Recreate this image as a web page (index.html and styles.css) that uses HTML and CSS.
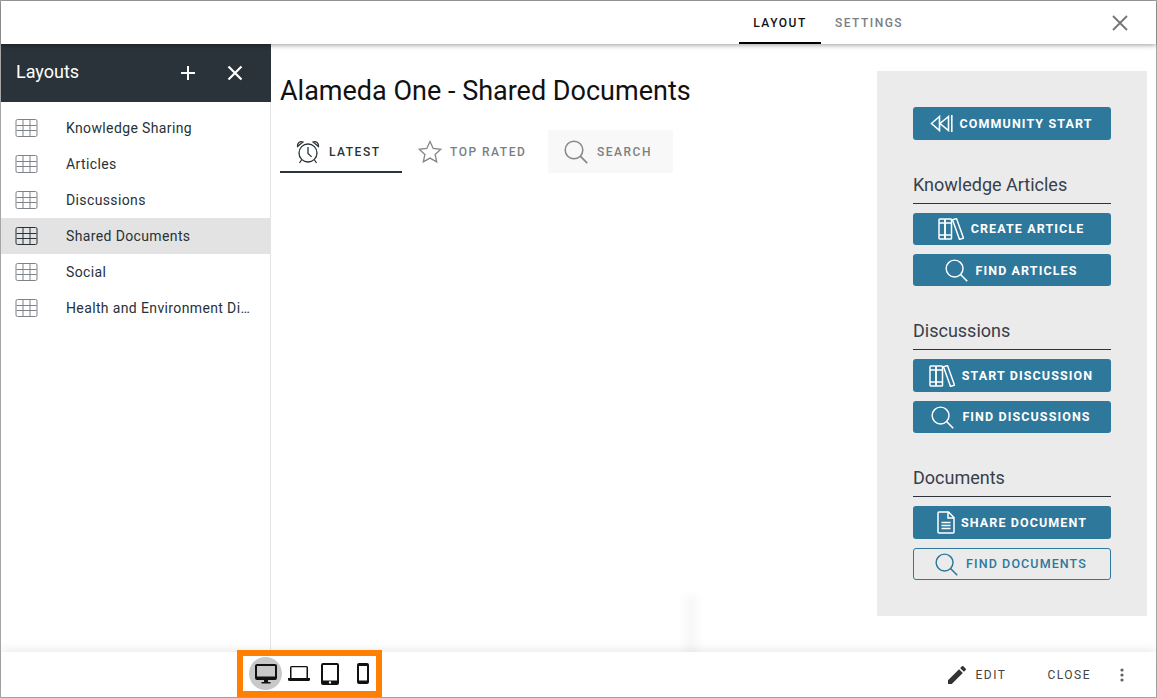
FILE: index.html
```html
<!DOCTYPE html>
<html lang="en">
<head>
<meta charset="utf-8">
<title>Layouts</title>
<link rel="stylesheet" href="styles.css">
</head>
<body>
<svg class="defs" width="0" height="0" aria-hidden="true">
  <symbol id="grid" viewBox="0 0 22 18"><rect x=".5" y=".5" width="21" height="17" rx="1.5" fill="none" stroke="currentColor"/><path d="M7.5 1v16M14.500 1v16M1 6.500h20M1 11.500h20" stroke="currentColor" fill="none"/></symbol>
  <symbol id="search" viewBox="0 0 24 24"><circle cx="10" cy="10" r="8.800" fill="none" stroke="currentColor" stroke-width="1.500"/><path d="M16.200 16.200l7 7" stroke="currentColor" stroke-width="1.700" fill="none"/></symbol>
  <symbol id="books" viewBox="0 0 26 22"><g fill="none" stroke="currentColor" stroke-width="1.500"><rect x="1" y="1" width="6" height="20" rx=".8"/><rect x="7" y="1" width="6.500" height="20" rx=".8"/><path d="M1 5h12.500M1 17h12.500"/><path d="M14.500 1.800l4-1.200 7 19.500-4 1.300z"/></g></symbol>
</svg>
<div class="shell">
  <header class="topbar">
    <nav class="toptabs">
      <a class="toptab active">LAYOUT</a>
      <a class="toptab">SETTINGS</a>
    </nav>
    <svg class="topclose" width="16" height="16" viewBox="0 0 16 16"><path d="M1 1l14 14M15 1L1 15" stroke="#757575" stroke-width="1.800" fill="none"/></svg>
  </header>
  <div class="main">
    <aside class="sidebar">
      <div class="sidehead">
        <span class="sidetitle">Layouts</span>
        <svg class="sideicon plus" width="14" height="14" viewBox="0 0 14 14"><path d="M7 0v14M0 7h14" stroke="#fff" stroke-width="2" fill="none"/></svg>
        <svg class="sideicon cross" width="16" height="16" viewBox="0 0 16 16"><path d="M1.500 1.500l13 13M14.500 1.500l-13 13" stroke="#fff" stroke-width="2.200" fill="none"/></svg>
      </div>
      <ul class="sidelist">
        <li class="sideitem"><svg class="gridicon"><use href="#grid"/></svg><span class="sidelabel">Knowledge Sharing</span></li>
        <li class="sideitem"><svg class="gridicon"><use href="#grid"/></svg><span class="sidelabel">Articles</span></li>
        <li class="sideitem"><svg class="gridicon"><use href="#grid"/></svg><span class="sidelabel">Discussions</span></li>
        <li class="sideitem selected"><svg class="gridicon"><use href="#grid"/></svg><span class="sidelabel">Shared Documents</span></li>
        <li class="sideitem"><svg class="gridicon"><use href="#grid"/></svg><span class="sidelabel">Social</span></li>
        <li class="sideitem"><svg class="gridicon"><use href="#grid"/></svg><span class="sidelabel">Health and Environment Discussions</span></li>
      </ul>
    </aside>
    <main class="content">
      <section class="docs">
        <h1 class="pagetitle">Alameda One - Shared Documents</h1>
        <div class="tabs">
          <div class="tab tab-latest">
            <svg width="24" height="24" viewBox="0 0 24 24" fill="none" stroke="#2b343a" stroke-width="1.300"><circle cx="12" cy="13" r="9"/><path d="M12 7v6.500l3.600 3.400"/><path d="M1.500 6.500C1 3 4 .8 7 2zM22.500 6.500C23 3 20 .8 17 2z"/><path d="M5.500 20l-2 3M18.500 20l2 3"/></svg>
            <span>LATEST</span>
          </div>
          <div class="tab tab-top">
            <svg width="24" height="23" viewBox="0 0 24 23" fill="none" stroke="#868686" stroke-width="1.300"><path d="M12 1.500l3.200 7 7.600.8-5.700 5.100 1.600 7.500L12 18.100l-6.700 3.800 1.600-7.500L1.200 9.300l7.600-.8z"/></svg>
            <span>TOP RATED</span>
          </div>
          <div class="tab tab-search">
            <svg class="tabsearch"><use href="#search"/></svg>
            <span>SEARCH</span>
          </div>
        </div>
        <span class="ghost"></span>
      </section>
      <aside class="panel">
        <a class="btn btn-tall btn-first">
          <svg width="23" height="17" viewBox="0 0 23 17" fill="none" stroke="#fff" stroke-width="1.600"><path d="M9.500 1.500L1.500 8.500l8 7zM18.500 1.500L10 8.500l8.500 7zM21.800 0v17"/></svg>
          <span>COMMUNITY START</span>
        </a>
        <h2 class="group">Knowledge Articles</h2>
        <a class="btn btn-books btn-up"><svg class="bookicon"><use href="#books"/></svg><span>CREATE ARTICLE</span></a>
        <a class="btn btn-find"><svg class="btnsearch"><use href="#search"/></svg><span>FIND ARTICLES</span></a>
        <h2 class="group">Discussions</h2>
        <a class="btn btn-tall btn-books"><svg class="bookicon"><use href="#books"/></svg><span>START DISCUSSION</span></a>
        <a class="btn btn-find btn-up"><svg class="btnsearch"><use href="#search"/></svg><span>FIND DISCUSSIONS</span></a>
        <h2 class="group">Documents</h2>
        <a class="btn btn-tall">
          <svg width="18" height="23" viewBox="0 0 18 23" fill="none" stroke="#fff" stroke-width="1.500"><path d="M2 1h9.500L17 6.500V21a1 1 0 0 1-1 1H2a1 1 0 0 1-1-1V2a1 1 0 0 1 1-1zM11 1v6h6"/><path d="M4.500 11.500h9M4.500 14.500h9M4.500 17.500h9"/></svg>
          <span>SHARE DOCUMENT</span>
        </a>
        <a class="btn btn-find btn-outline btn-up"><svg class="btnsearch"><use href="#search"/></svg><span>FIND DOCUMENTS</span></a>
      </aside>
    </main>
  </div>
  <footer class="footer">
    <div class="devices">
      <span class="device current">
        <svg width="22" height="21" viewBox="0 0 22 21"><path fill="#111" fill-rule="evenodd" d="M2 1h18a2 2 0 0 1 2 2v12a2 2 0 0 1-2 2h-7v2h2.500v1.500h-9V19H9v-2H2a2 2 0 0 1-2-2V3a2 2 0 0 1 2-2zm0 2v10.500h18V3z"/></svg>
      </span>
      <span class="device">
        <svg width="22" height="16" viewBox="0 0 22 16"><path fill="#111" fill-rule="evenodd" d="M3.500 0h15A1.500 1.500 0 0 1 20 1.500V12h2v1.500a1.500 1.500 0 0 1-1.500 1.500h-19A1.500 1.500 0 0 1 0 13.500V12h2V1.500A1.500 1.500 0 0 1 3.500 0zm0 1.300V12h15V1.300z"/></svg>
      </span>
      <span class="device device-tablet">
        <svg width="18" height="22" viewBox="0 0 18 22"><path fill="#111" fill-rule="evenodd" d="M2 0h14a2 2 0 0 1 2 2v18a2 2 0 0 1-2 2H2a2 2 0 0 1-2-2V2a2 2 0 0 1 2-2zm0 2v15.500h14V2zm7 16.200a1.200 1.200 0 1 0 0 2.400 1.200 1.200 0 0 0 0-2.400z"/></svg>
      </span>
      <span class="device">
        <svg width="12" height="21" viewBox="0 0 12 21"><path fill="#111" fill-rule="evenodd" d="M2 0h8a2 2 0 0 1 2 2v17a2 2 0 0 1-2 2H2a2 2 0 0 1-2-2V2a2 2 0 0 1 2-2zm0 3v14.500h8V3z"/></svg>
      </span>
    </div>
    <div class="actions">
      <a class="action action-edit">
        <svg width="18" height="18" viewBox="3 3 18 18"><path fill="#333" d="M3 17.250V21h3.750L17.810 9.940l-3.750-3.750L3 17.250zM20.710 7.040a1 1 0 0 0 0-1.410l-2.340-2.340a1 1 0 0 0-1.410 0l-1.830 1.830 3.750 3.750 1.830-1.830z"/></svg>
        <span>EDIT</span>
      </a>
      <a class="action">CLOSE</a>
      <svg class="more" width="4" height="14" viewBox="0 0 4 14"><circle cx="2" cy="2" r="1.600" fill="#616161"/><circle cx="2" cy="7" r="1.600" fill="#616161"/><circle cx="2" cy="12" r="1.600" fill="#616161"/></svg>
    </div>
  </footer>
</div>
</body>
</html>
```

FILE: styles.css
```css
* { box-sizing: border-box; }
html, body { margin: 0; padding: 0; height: 100%; background: #fff; overflow: hidden; }
body { font-family: Roboto, "Liberation Sans", sans-serif; color: #263238; }
.defs { position: absolute; }
h1, h2, ul { margin: 0; padding: 0; }
.shell { width: 1157px; height: 698px; border: 1px solid #a6a6a6; display: flex; flex-direction: column; }

.topbar { height: 43px; flex: none; display: flex; align-items: center; justify-content: flex-end; position: relative; z-index: 2; box-shadow: 0 1px 5px rgba(0,0,0,.4); background: #fff; }
.toptabs { display: flex; height: 43px; margin-right: 195px; }
.toptab { height: 43px; display: flex; align-items: center; justify-content: center; font-size: 12px; font-weight: 500; letter-spacing: 1.5px; color: #7a7f85; width: 82px; }
.toptab.active { color: #111; border-bottom: 2px solid #000; padding-top: 2px; }
.toptab + .toptab { width: 96px; }
.topclose { margin-right: 28px; }

.main { flex: 1; display: flex; min-height: 0; }
.sidebar { width: 270px; flex: none; border-right: 1px solid #e4e4e4; }
.sidehead { height: 58px; margin-right: -1px; background: #2a3339; display: flex; align-items: center; color: #fff; padding: 0 0 3px 15px; }
.sidetitle { font-size: 18px; flex: 1; }
.sideicon.plus { margin-right: 32px; }
.sideicon.cross { margin-right: 28px; }
.sidehead .sideicon { position: relative; top: 1.500px; }
.sidelist { list-style: none; padding-top: 8px; }
.sideitem { height: 36px; display: flex; align-items: center; padding-left: 14px; color: #7d8388; }
.sideitem.selected { background: #e3e3e3; color: #263238; }
.gridicon { width: 23px; height: 18px; flex: none; margin-right: 28px; }
.sidelabel { font-size: 14px; letter-spacing: .37px; color: #263238; white-space: nowrap; overflow: hidden; text-overflow: ellipsis; width: 186px; }

.content { flex: 1; display: flex; justify-content: space-between; padding: 27px 9px 0 9px; }
.docs { width: 450px; position: relative; }
.pagetitle { font-size: 27px; font-weight: 400; line-height: 40px; color: #111; }
.tabs { display: flex; margin-top: 19px; height: 43px; }
.tab { display: flex; align-items: center; font-size: 12px; font-weight: 500; letter-spacing: 1.5px; color: #7a7f85; height: 43px; }
.tab-latest { width: 122px; padding: 2px 0 0 16px; color: #263238; border-bottom: 2px solid #2b343a; gap: 9px; }
.tab-top { width: 146px; padding-left: 16px; gap: 8px; }
.tab-search { width: 125px; padding-left: 16px; gap: 9px; background: #f8f8f8; color: #7f7f7f; }
.tabsearch { width: 24px; height: 24px; color: #868686; }
.ghost { position: absolute; left: 405px; top: 525px; width: 12px; height: 60px; background: rgba(0,0,0,.03); filter: blur(4px); }

.panel { width: 270px; height: 545px; background: #ebebeb; padding: 36px 36px 0; display: flex; flex-direction: column; }
.group { font-size: 18px; font-weight: 400; color: #37404a; line-height: 22px; height: 30px; border-bottom: 1px solid #2b343a; margin: 25px 0 9px; }
.btn { height: 32px; margin-bottom: 9px; background: #2e789c; border-radius: 3px; color: #fff; display: flex; align-items: center; justify-content: center; gap: 6px; font-size: 12.500px; font-weight: 700; letter-spacing: 1.1px; flex: none; white-space: nowrap; }
.btn-tall { height: 33px; }
.btn-first { gap: 7px; padding-right: 2px; }
.btn-books { gap: 7px; padding-right: 2px; }
.btn-find { gap: 8px; padding-right: 2px; }
.btn-up span { position: relative; top: -1px; }
.btn-outline { background: transparent; border: 1px solid #2e789c; color: #2e789c; font-weight: 500; }
.bookicon { width: 26px; height: 22px; }
.btnsearch { width: 23px; height: 23px; }

.footer { height: 45px; flex: none; display: flex; align-items: center; justify-content: space-between; padding-left: 236px; background: #fff; position: relative; z-index: 2; box-shadow: 0 -2px 10px rgba(0,0,0,.09); }
.devices { width: 145px; height: 47px; margin-top: -2px; border: 6px solid #ff8000; display: flex; align-items: center; padding-left: 6px; background: #fff; }
.device { width: 33px; height: 33px; display: flex; align-items: center; justify-content: center; border-radius: 50%; flex: none; }
.device.current { background: #c8c8c8; }
.device-tablet { margin-left: -2px; }
.actions { display: flex; align-items: center; font-size: 12px; letter-spacing: 1.5px; color: #444; margin-right: 32px; }
.action { display: flex; align-items: center; }
.action-edit { gap: 9px; margin-right: 41px; }
.more { margin-left: 29px; }
```
